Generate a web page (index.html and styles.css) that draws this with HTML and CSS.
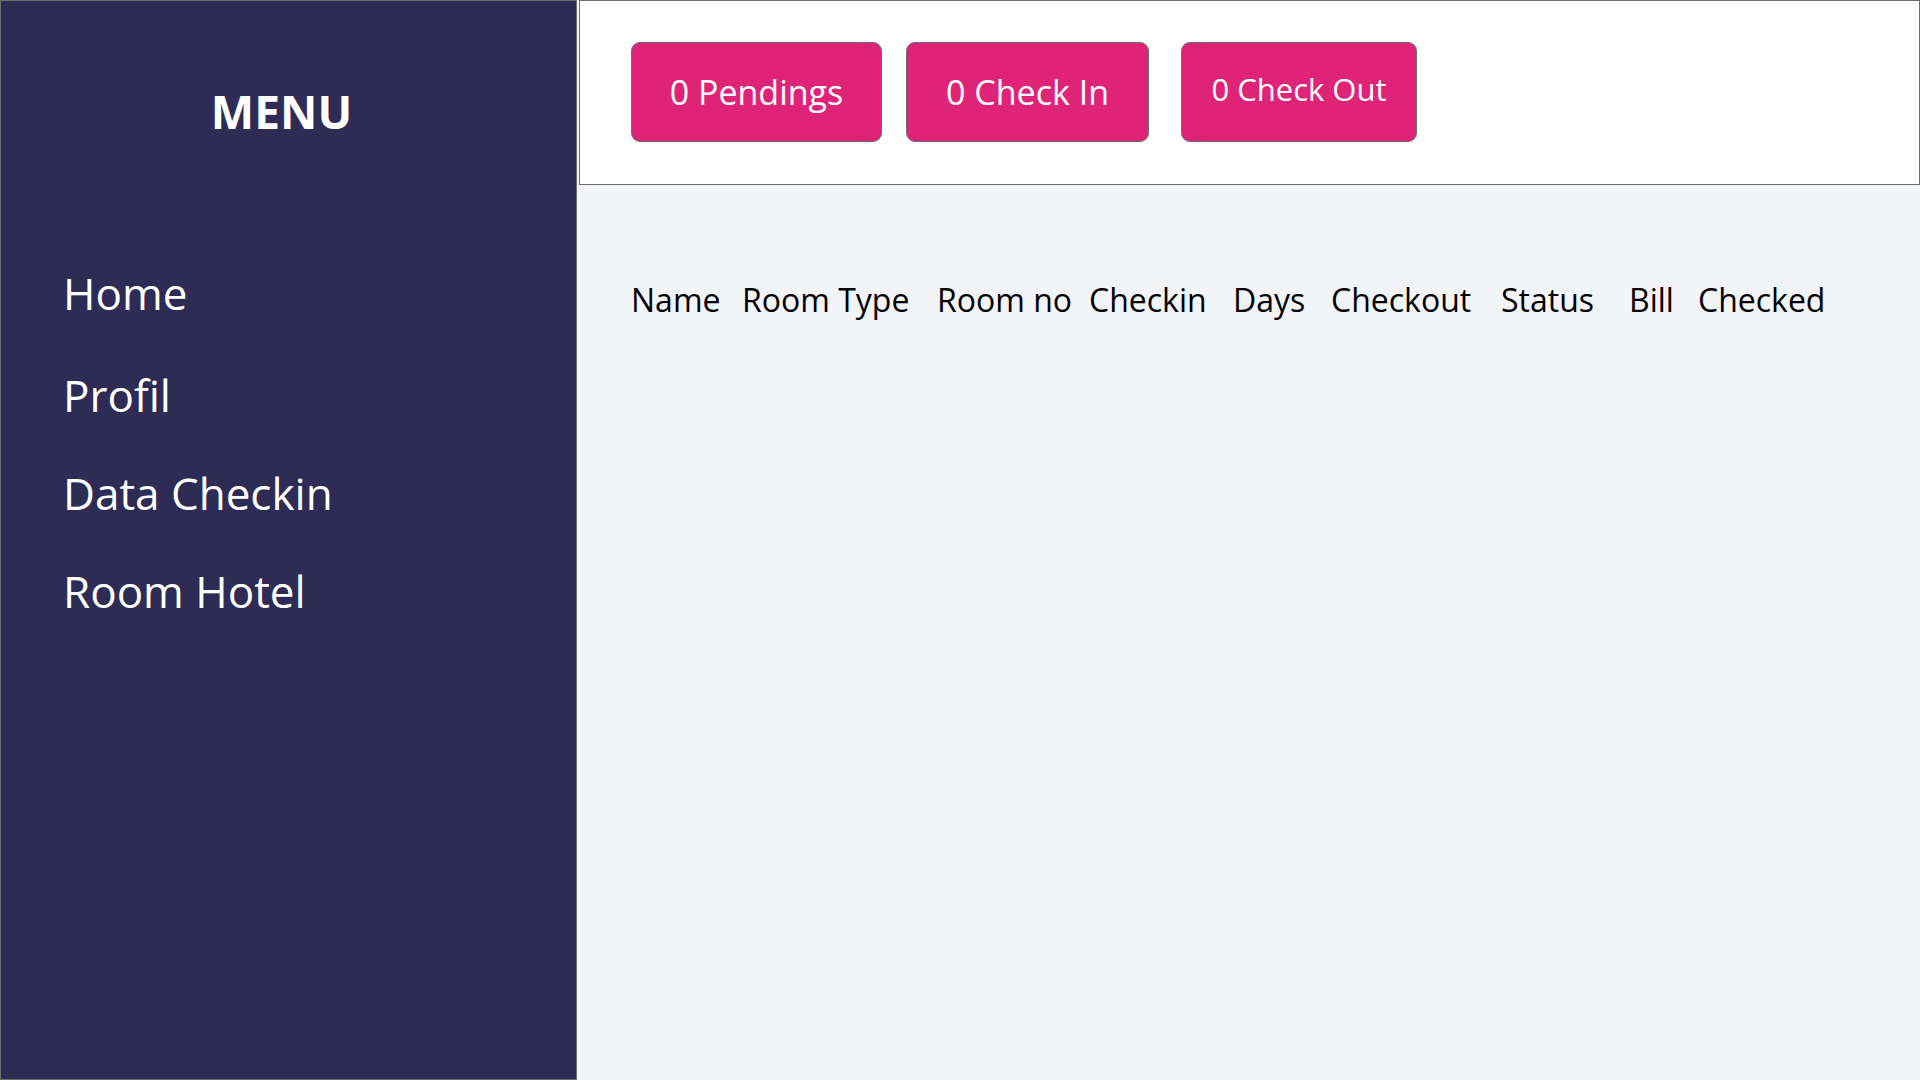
FILE: index.html
```html
<!DOCTYPE html>
<html lang="en">
<head>
<meta charset="utf-8">
<title>Dashboard</title>
<link rel="stylesheet" href="styles.css">
</head>
<body>
<div class="layout">
  <aside class="sidebar">
    <h1 class="menu-title">MENU</h1>
    <nav class="nav">
      <a class="nav-item" href="#">Home</a>
      <a class="nav-item" href="#">Profil</a>
      <a class="nav-item" href="#">Data Checkin</a>
      <a class="nav-item" href="#">Room Hotel</a>
    </nav>
  </aside>
  <main class="main">
    <header class="topbar">
      <button class="btn btn-pending">0 Pendings</button>
      <button class="btn btn-checkin">0 Check In</button>
      <button class="btn btn-checkout">0 Check Out</button>
    </header>
    <div class="table-head">
      <span>Name</span>
      <span>Room Type</span>
      <span>Room no</span>
      <span>Checkin</span>
      <span>Days</span>
      <span>Checkout</span>
      <span>Status</span>
      <span>Bill</span>
      <span>Checked</span>
    </div>
  </main>
</div>
</body>
</html>
```

FILE: styles.css
```css
* { box-sizing: border-box; }
html, body {
  margin: 0;
  padding: 0;
  height: 100%;
}
body {
  font-family: "Comic Sans MS", "Open Sans", "DejaVu Sans", sans-serif;
  background: #f3f4f8;
  color: #000;
}
.layout {
  display: flex;
  height: 1080px;
}
.sidebar {
  width: 577px;
  flex: 0 0 577px;
  height: 1080px;
  background: #2e2c54;
  border: 1px solid #6e6e6e;
  color: #fff;
}
.menu-title {
  margin: 78px 0 0 0;
  padding-right: 14px;
  font-size: 46px;
  font-weight: 700;
  line-height: 64px;
  text-align: center;
}
.nav {
  display: flex;
  flex-direction: column;
  margin-top: 101px;
  padding-left: 62px;
}
.nav-item {
  color: #fff;
  text-decoration: none;
  font-size: 44px;
  line-height: 98px;
}
.nav-item:first-child {
  margin-bottom: 4px;
}
.main {
  flex: 1;
  display: flex;
  flex-direction: column;
}
.topbar {
  display: flex;
  align-items: flex-start;
  height: 185px;
  margin-left: 2px;
  padding: 41px 0 0 51px;
  background: #fff;
  border: 1px solid #6e6e6e;
}
.btn {
  display: flex;
  align-items: center;
  justify-content: center;
  height: 100px;
  padding: 0;
  background: #df2478;
  color: #fff;
  border: 1px solid #6e6e6e;
  border-radius: 9px;
  font-family: inherit;
  font-size: 34px;
}
.btn-pending { width: 251px; margin-right: 24px; }
.btn-checkin { width: 243px; margin-right: 32px; }
.btn-checkout { width: 236px; font-size: 31px; padding-bottom: 6px; }
.table-head {
  display: grid;
  grid-template-columns: 91px 175px 132px 124px 78px 150px 108px 49px 135px;
  column-gap: 20px;
  margin-top: 93px;
  padding-left: 54px;
  font-size: 32px;
  white-space: nowrap;
}
```
